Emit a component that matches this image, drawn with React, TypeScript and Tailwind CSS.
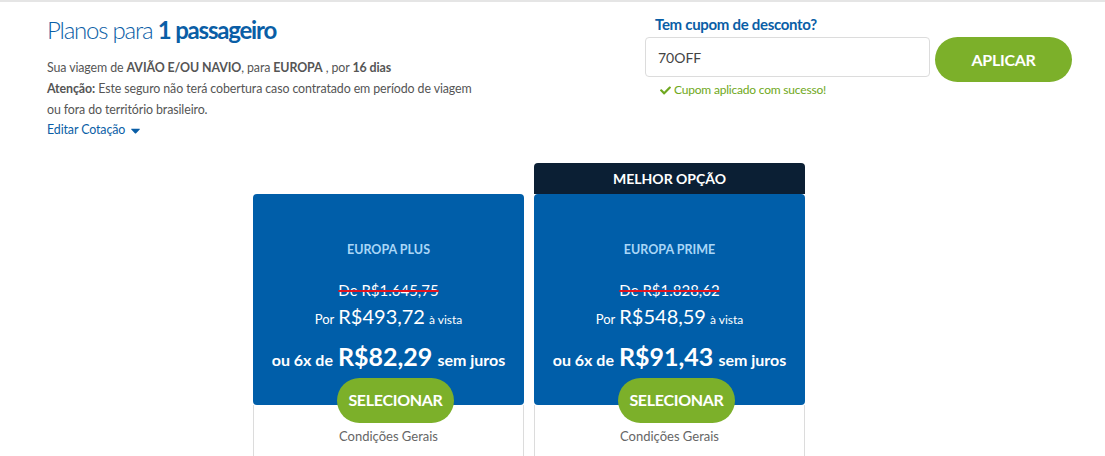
import React from 'react';
import { FaCheck, FaCaretDown } from 'react-icons/fa';

type Plan = {
  name: string;
  oldPrice: string;
  price: string;
  installment: string;
  best?: boolean;
};

const plans: Plan[] = [
  { name: 'EUROPA PLUS', oldPrice: 'R$1.645,75', price: 'R$493,72', installment: 'R$82,29' },
  { name: 'EUROPA PRIME', oldPrice: 'R$1.828,62', price: 'R$548,59', installment: 'R$91,43', best: true },
];

function PlanCard({ plan }: { plan: Plan }) {
  return (
    <div className="w-[271px] flex flex-col font-['Lato',sans-serif]">
      {/* header slot */}
      <div
        className={
          plan.best
            ? 'h-[31px] bg-[#0b1f34] rounded-t-[4px] flex items-center justify-center text-white font-bold text-[14px]'
            : 'h-[31px]'
        }
      >
        {plan.best ? 'MELHOR OPÇÃO' : ''}
      </div>

      <div className="h-[211px] bg-[#005ea9] rounded-[4px] flex flex-col items-center pt-[48px] text-white">
        <div className="text-[12.5px] font-bold text-[#a9d6f7] leading-[16px]">{plan.name}</div>
        <div className="mt-[22px] text-[15px] leading-[20px] line-through decoration-[#e3141f] decoration-2">
          De {plan.oldPrice}
        </div>
        <div className="mt-[3px] leading-[26px] flex items-baseline gap-[4px]">
          <span className="text-[13px]">Por</span>
          <span className="text-[20px]">{plan.price}</span>
          <span className="text-[12px]">à vista</span>
        </div>
        <div className="mt-[8px] leading-[30px] font-bold flex items-baseline gap-[5px]">
          <span className="text-[16px]">ou 6x de</span>
          <span className="text-[25px]">{plan.installment}</span>
          <span className="text-[16px]">sem juros</span>
        </div>
      </div>

      <div className="flex-1 border-x border-[#dcdcdc] flex flex-col items-center">
        <button className="-mt-[27px] ml-[14px] w-[117px] h-[45px] rounded-full bg-[#7cb02a] text-white font-bold text-[16px] tracking-[-0.3px]">
          SELECIONAR
        </button>
        <div className="mt-[4px] text-[13px] text-[#666]">Condições Gerais</div>
      </div>
    </div>
  );
}

export default function App() {
  return (
    <div className="w-full h-[456px] overflow-hidden bg-white border-t-2 border-[#e5e5e5] flex flex-col">
      <div className="flex">
        <div className="pl-[47px] pt-[13px] w-[645px] font-['Lato',sans-serif]">
          <h1 className="text-[24px] leading-[30px] text-[#0a5ea6] font-light tracking-[-1.2px]">
            Planos para <span className="font-bold">1 passageiro</span>
          </h1>
          <div className="mt-[12px] text-[12.4px] leading-[21px] text-[#555] tracking-[-0.1px]">
            <p>
              Sua viagem de <b>AVIÃO E/OU NAVIO</b>, para <b>EUROPA</b> , por <b>16 dias</b>
            </p>
            <p className="w-[430px]">
              <b>Atenção:</b> Este seguro não terá cobertura caso contratado em período de viagem ou fora do
              território brasileiro.
            </p>
          </div>
          <div className="mt-[1px] flex items-center gap-[3px] text-[12.4px] text-[#0a5ea6] tracking-[-0.1px]">
            Editar Cotação <FaCaretDown className="w-[15px] h-[15px]" />
          </div>
        </div>

        <div className="pt-[12px] font-['Lato',sans-serif]">
          <div className="pl-[10px] text-[15px] font-bold text-[#0a5ea6] leading-[20px] tracking-[-0.3px]">
            Tem cupom de desconto?
          </div>
          <div className="mt-[3px] flex items-start gap-[5px]">
            <div className="w-[285px] h-[40px] border border-[#dcdcdc] rounded-[4px] flex items-center pl-[12px] text-[14px] text-[#444]">
              70OFF
            </div>
            <button className="w-[137px] h-[45px] rounded-full bg-[#7cb02a] text-white font-bold text-[16px] tracking-[-0.3px]">
              APLICAR
            </button>
          </div>
          <div className="-mt-[1px] pl-[15px] flex items-center gap-[3px] text-[12px] text-[#6fa820] tracking-[-0.2px]">
            <FaCheck className="w-[11px] h-[11px]" /> Cupom aplicado com sucesso!
          </div>
        </div>
      </div>

      <div className="mt-[23px] ml-[253px] flex gap-[10px] flex-1">
        {plans.map((p) => (
          <PlanCard key={p.name} plan={p} />
        ))}
      </div>
    </div>
  );
}
